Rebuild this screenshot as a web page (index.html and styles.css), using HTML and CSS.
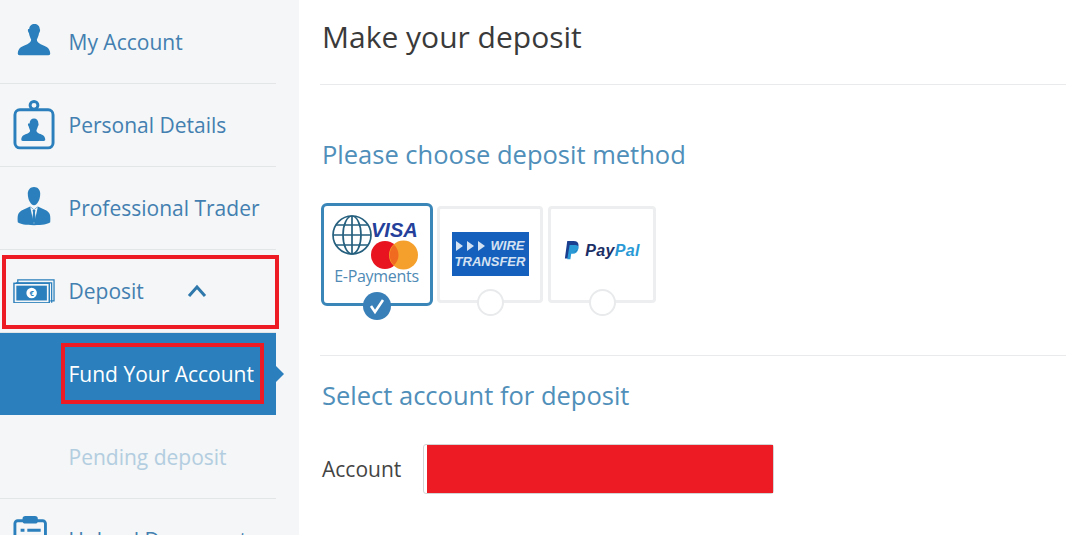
FILE: index.html
```html
<!DOCTYPE html>
<html lang="en">
<head>
	<meta charset="UTF-8">
	<title>Make your deposit</title>
	<link rel="stylesheet" href="styles.css">
</head>
<body>
	<div class="page">
		<div class="sidebar">
			<a class="item">
				<svg class="icon" viewBox="0 0 44 44"><path transform="translate(0 2) scale(1 1.060)" fill="#2a7fbc" d="M17 6c0-3 2.500-5 5.500-5S28 3 28 6c1 1 0 3-.7 4-.5 3-1.800 5.500-2.300 6.500 0 2 1 3 4 4.500 5 2 9.500 3 10 9 0 1-.5 2-2 2H7c-1.500 0-2-1-2-2 .5-6 5-7 10-9 3-1.500 4-2.500 4-4.500-.5-1-1.800-3.500-2.300-6.500-.7-1-1.700-3-.7-4z"/></svg>
				<span>My Account</span>
			</a>
			<a class="item">
				<svg class="icon" viewBox="0 0 43 52"><g fill="none" stroke="#2a7fbc" stroke-width="3"><rect x="2" y="10" width="39" height="39" rx="5"/><circle cx="21.500" cy="5.500" r="4"/></g><path fill="#2a7fbc" d="M17 24c0-3 2-5 4.500-5s4.500 2 4.500 5c.5 1 0 2-.5 3-.5 2-1 3-1.500 4 0 2 1 2.500 3 3.500 3 1 6 2 6 6 0 1-.5 1.500-1.500 1.500H10c-1 0-1.500-.5-1.500-1.500 0-4 3-5 6-6 2-1 3-1.500 3-3.500-.5-1-1-2-1.500-4-.5-1-1-2-.5-3z"/></svg>
				<span>Personal Details</span>
			</a>
			<a class="item">
				<svg class="icon" viewBox="0 0 44 44">
					<path fill="#2a7fbc" d="M15.500 7c0-4 2.500-7 6.500-7s6.500 3 6.500 7c0 6-3 12-6.500 12s-6.500-6-6.500-12z"/>
					<path fill="#2a7fbc" d="M5 37c-.5-7 0-10 4-12.500l9-4 4 3 4-3 9 4c4 2.500 4.500 5.500 4 12.500-3 2-8 3-17 3s-14-1-17-3z"/>
					<path fill="#f4f6f7" d="M18 21l4 18 4-18-4 3z"/>
					<path fill="#2a7fbc" d="M20.500 24h3l-.5 3 1 8-2 3-2-3 1-8z"/>
				</svg>
				<span>Professional Trader</span>
			</a>
			<a class="item">
				<svg class="icon" viewBox="0 0 44 26">
					<path d="M5 4V.8h38v22h-4M3 4h37.500v21" fill="none" stroke="#2a7fbc" stroke-width="1.300"/>
					<rect x="1" y="4.500" width="37" height="20.500" fill="#f4f6f7" stroke="#2a7fbc" stroke-width="1.500"/>
					<rect x="3.500" y="7" width="32" height="15.500" fill="#2a7fbc"/>
					<circle cx="19.500" cy="14.700" r="5.500" fill="#fff"/>
					<text class="euro" x="19.500" y="17.500">€</text>
				</svg>
				<span>Deposit</span>
				<svg class="chevron" viewBox="0 0 20 14"><path d="M2 12l8-9 8 9" fill="none" stroke="#2f78ab" stroke-width="3"/></svg>
			</a>
			<a class="item sub active"><span>Fund Your Account</span></a>
			<a class="item sub pending"><span>Pending deposit</span></a>
			<a class="item">
				<svg class="icon" viewBox="0 0 44 52"><rect x="2" y="6" width="32" height="44" rx="3" fill="none" stroke="#2a7fbc" stroke-width="3"/><rect x="10" y="1" width="16" height="8" rx="3" fill="#2a7fbc"/><path d="M8 16h4M15 16h14M8 23h4M15 23h14" stroke="#2a7fbc" stroke-width="3"/></svg>
				<span>Upload Documents</span>
			</a>
		</div>
		<div class="main">
			<h1 class="title">Make your deposit</h1>
			<h2 class="section-title methods-title">Please choose deposit method</h2>
			<div class="methods">
				<div class="method selected">
					<svg viewBox="0 0 106 97" class="method-logo">
						<g fill="none" stroke="#26607f" stroke-width="1.700"><circle cx="28" cy="29" r="19"/><ellipse cx="28" cy="29" rx="9" ry="19"/><path d="M28 10v38M9 29h38M12 19h32M12 39h32"/></g>
						<text class="visa" x="47" y="31">VISA</text>
						<circle cx="61" cy="49" r="14" fill="#e8141f"/><circle cx="79.500" cy="49" r="14.500" fill="#f5a02c"/>
						<path d="M70 38.700a14 14 0 0 1 0 20.600a14.500 14.500 0 0 1 0-20.600z" fill="#f06a1f"/>
						<text class="epay" x="52.500" y="76">E-Payments</text>
					</svg>
					<span class="radio checked"><svg viewBox="0 0 28 28"><path d="M8 14l4 6 8-12" fill="none" stroke="#fff" stroke-width="2.600"/></svg></span>
				</div>
				<div class="method">
					<div class="wire"><span class="wire-top"><i></i><i></i><i></i>WIRE</span><span>TRANSFER</span></div>
					<span class="radio"></span>
				</div>
				<div class="method wide">
					<div class="paypal">
						<svg viewBox="0 0 20 24"><path fill="#1b3f8f" d="M4 0h8c5 0 7 3 6 7-1 5-4 7-8 7H7l-1 8H1z"/><path fill="#2a9ad6" d="M7 5h7c4 0 5 2 4 5-1 4-3 6-7 6H9l-1 7H4z"/><path fill="#152a66" d="M7 14h3c3 0 5-1 6.500-3C16 13 13 14 10 14H7z"/></svg>
						<b>Pay</b><b class="pal">Pal</b>
					</div>
					<span class="radio"></span>
				</div>
			</div>
			<h2 class="section-title account-title">Select account for deposit</h2>
			<div class="account-row">
				<label>Account</label>
				<div class="account-box"><div class="redacted"></div></div>
			</div>
		</div>
	</div>
	<div class="mark mark-deposit"></div>
	<div class="mark mark-fund"></div>
</body>
</html>
```
FILE: styles.css
```css
*{
	margin: 0;
	padding: 0;
	box-sizing: border-box;
}
html, body{
	height: 100%;
	overflow: hidden;
}
body{
	font-family: "Open Sans", "Noto Sans", sans-serif;
	background: #fff;
	position: relative;
}
.page{
	display: flex;
	height: 535px;
	overflow: hidden;
}

/* left menu */
.sidebar{
	width: 299px;
	flex: none;
	padding: 1px 23px 0 0;
	background: #f4f6f7;
}
.item{
	display: flex;
	align-items: center;
	height: 83px;
	border-bottom: 1px solid #e3e6e7;
	color: #437fb0;
	font-size: 21px;
	position: relative;
}
.item .icon{
	width: 42px;
	flex: none;
	margin: 0 13.500px 0 13px;
}
.chevron{
	width: 20px;
	height: 14px;
	margin-left: 43px;
}
.euro{
	font: bold 8px "Open Sans", sans-serif;
	fill: #2a7fbc;
	text-anchor: middle;
}
.sub{
	padding-left: 68.500px;
	border-bottom: 0;
}
.active{
	height: 82px;
	background: #2a7fbc;
	color: #fff;
}
.active:after{
	content: "";
	position: absolute;
	left: 100%;
	top: 33px;
	border-left: 8px solid #2a7fbc;
	border-top: 8px solid transparent;
	border-bottom: 8px solid transparent;
}
.pending{
	height: 84px;
	color: #b3cde0;
	border-bottom: 1px solid #e3e6e7;
}

/* right side */
.main{
	flex: 1;
	padding-left: 21px;
	min-width: 0;
}
.title{
	height: 85px;
	padding: 16px 0 0 2px;
	border-bottom: 1px solid #e8eaeb;
	font-size: 30px;
	font-weight: 400;
	color: #3a3a3a;
}
.section-title{
	font-size: 25.5px;
	font-weight: 400;
	color: #4f8fba;
	padding-left: 2px;
}
.methods-title{
	margin-top: 52px;
}
.methods{
	display: flex;
	margin-top: 32px;
	height: 153px;
	border-bottom: 1px solid #e8eaeb;
	align-items: flex-start;
}
.method{
	width: 106px;
	height: 97px;
	margin-right: 5px;
	margin-top: 3px;
	background: #fff;
	border: 3px solid #eceeef;
	border-radius: 4px;
	position: relative;
	display: flex;
	align-items: center;
	justify-content: center;
}
.method.wide{
	width: 108px;
}
.method.selected{
	width: 112px;
	height: 103px;
	margin-top: 0;
	margin-left: 1px;
	margin-right: 4px;
	border-color: #3a86b8;
	border-radius: 6px;
}
.method-logo{
	width: 106px;
	height: 97px;
}
.radio{
	position: absolute;
	left: 50%;
	bottom: -16px;
	width: 27px;
	height: 27px;
	margin-left: -13px;
	border-radius: 50%;
	background: #fff;
	border: 2px solid #e8eaeb;
}
.radio.checked{
	width: 28px;
	height: 28px;
	margin-left: -14px;
	bottom: -17px;
	background: #3a80b8;
	border: 0;
}
.visa{
	font: italic bold 20px "Liberation Sans", sans-serif;
	fill: #24409a;
}
.epay{
	font: 16px "Open Sans", sans-serif;
	fill: #4f8ab5;
	text-anchor: middle;
	letter-spacing: -0.300px;
}
.wire{
	width: 77px;
	height: 44px;
	background: #1660bd;
	color: #d5e2f2;
	font: italic bold 13px "Liberation Sans", sans-serif;
	display: flex;
	flex-direction: column;
	align-items: center;
	justify-content: center;
	line-height: 16px;
	margin-bottom: 2px;
}
.wire-top{
	display: flex;
	align-items: center;
}
.wire-top i{
	width: 0;
	height: 0;
	margin-right: 4px;
	border-left: 7px solid #d5e2f2;
	border-top: 5px solid transparent;
	border-bottom: 5px solid transparent;
}
.wire-top i:last-of-type{
	margin-right: 6px;
}
.paypal{
	display: flex;
	align-items: center;
	font: italic bold 16px "Liberation Sans", sans-serif;
	letter-spacing: 0.300px;
	color: #1b2f66;
	margin-bottom: 8px;
}
.paypal svg{
	width: 16px;
	height: 19px;
	margin-right: 5px;
}
.paypal .pal{
	color: #2a9ad6;
}
.account-title{
	margin-top: 22px;
}
.account-row{
	display: flex;
	align-items: center;
	margin-top: 32px;
	padding-left: 2px;
	font-size: 21px;
	color: #444;
}
.account-row label{
	width: 101px;
}
.account-box{
	width: 351px;
	height: 50px;
	padding: 0 0 0 3px;
	border: 1px solid #d4d4d4;
	border-radius: 3px;
}
.redacted{
	height: 100%;
	background: #ed1c24;
}

/* red annotation frames drawn over the page */
.mark{
	position: absolute;
	border: 4px solid #ed1c24;
}
.mark-deposit{
	left: 2px;
	top: 255px;
	width: 277px;
	height: 74px;
}
.mark-fund{
	left: 61px;
	top: 343px;
	width: 203px;
	height: 61px;
}
```
